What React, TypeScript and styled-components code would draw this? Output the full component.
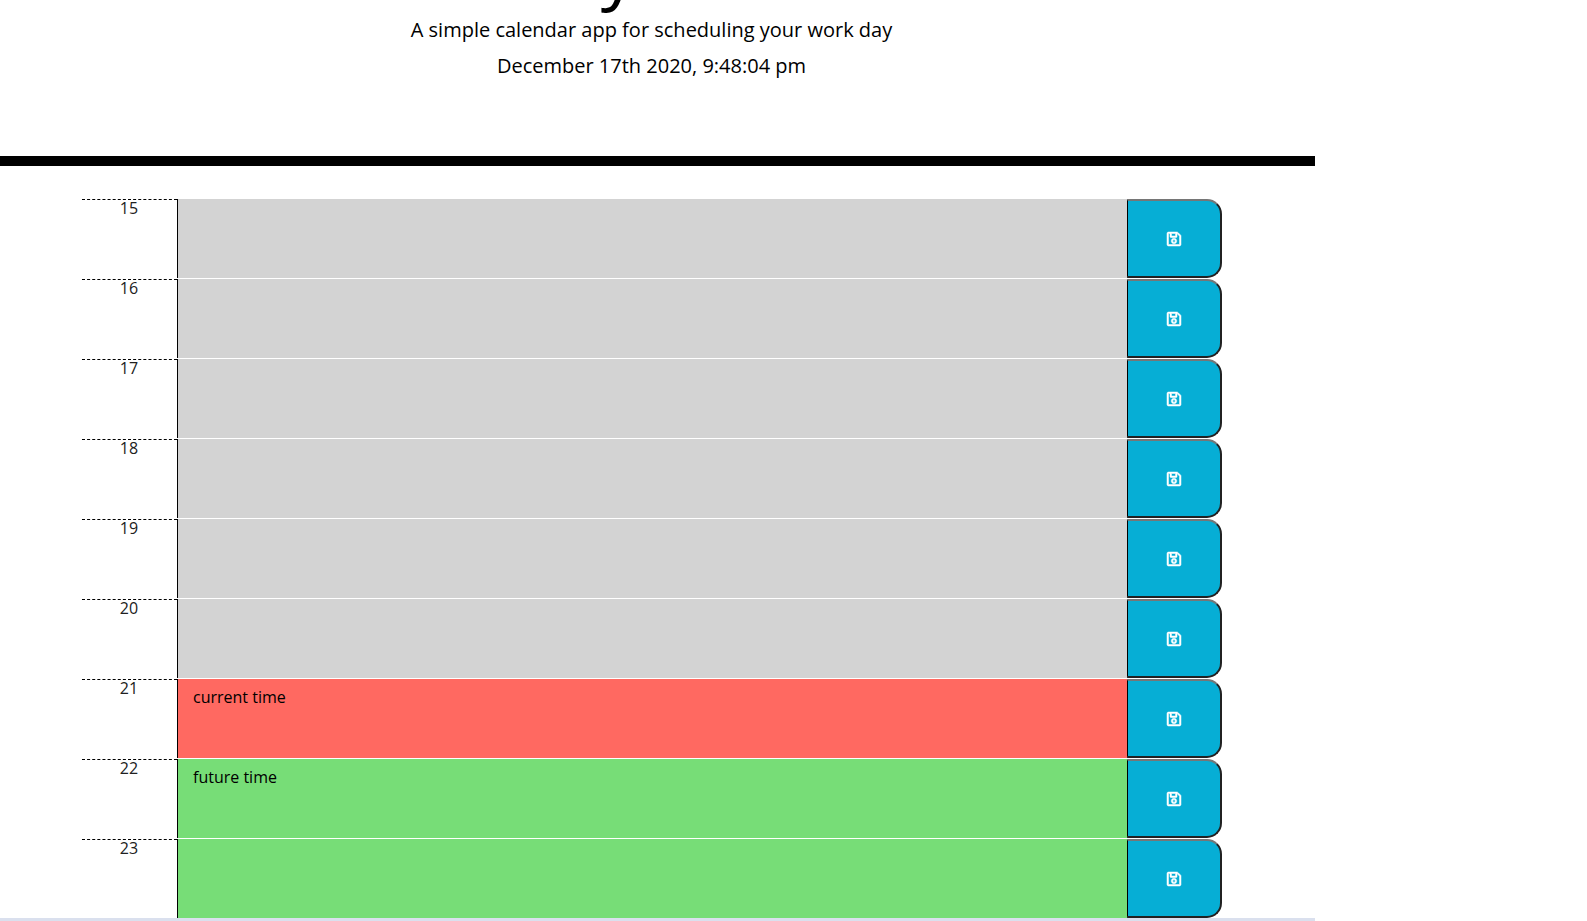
import React from "react";
import styled, { createGlobalStyle } from "styled-components";
import { FaRegSave } from "react-icons/fa";

type Tense = "past" | "present" | "future";

const slotColors: Record<Tense, string> = {
  past: "#d3d3d3",
  present: "#ff6961",
  future: "#77dd77",
};

const GlobalStyle = createGlobalStyle`
  *, *::before, *::after { box-sizing: border-box; }
  body {
    margin: 0;
    background: #fff;
    color: #000;
    font-family: "Open Sans", sans-serif;
    font-size: 16px;
    font-weight: 400;
    line-height: 24px;
  }
`;

const Page = styled.div`
  width: calc(100% - 272px);
  max-height: 100vh;
  overflow: hidden;
`;

const Header = styled.header`
  padding: 0 12px 69px 0;
  border-bottom: 10px solid #000;
  text-align: center;
`;

const Title = styled.h1`
  margin: -75px 0 4px;
  font-size: 72px;
  font-weight: 400;
  line-height: 86px;
`;

const Lead = styled.p`
  margin: 0 0 6px;
  font-size: 20px;
  line-height: 30px;
`;

const Schedule = styled.main`
  padding: 33px 93px 0 82px;
`;

const TimeBlock = styled.div`
  display: grid;
  grid-template-columns: 1fr 10fr 1fr;
  height: 79px;

  & + & {
    margin-top: 1px;
  }
`;

const Hour = styled.label`
  padding-right: 1px;
  border-top: 1px dashed #000;
  color: #212121;
  text-align: center;
  line-height: 16px;
`;

const Entry = styled.textarea<{ $tense: Tense }>`
  display: block;
  width: 100%;
  height: 100%;
  margin: 0;
  padding: 6px 15px;
  border: 0;
  border-left: 1px solid #000;
  border-radius: 0;
  outline: 0;
  resize: none;
  background: ${({ $tense }) => slotColors[$tense]};
  color: #000;
  font: inherit;
`;

const SaveButton = styled.button`
  display: flex;
  align-items: center;
  justify-content: center;
  padding: 0;
  border-style: solid;
  border-width: 2px 2px 2px 1px;
  border-color: #767676 #212121 #212121 #000;
  border-radius: 0 15px 15px 0;
  background: #06aed5;
  color: #fff;
  font-size: 16px;
  cursor: pointer;
`;

const SaveIcon = styled(FaRegSave)`
  stroke: #fff;
  stroke-width: 16px;
`;

const BottomEdge = styled.footer`
  height: 3px;
  background: #dae0ee;
`;

const slots: { hour: number; tense: Tense; text: string }[] = [
  { hour: 15, tense: "past", text: "" },
  { hour: 16, tense: "past", text: "" },
  { hour: 17, tense: "past", text: "" },
  { hour: 18, tense: "past", text: "" },
  { hour: 19, tense: "past", text: "" },
  { hour: 20, tense: "past", text: "" },
  { hour: 21, tense: "present", text: "current time" },
  { hour: 22, tense: "future", text: "future time" },
  { hour: 23, tense: "future", text: "" },
];

export default function App() {
  return (
    <>
      <GlobalStyle />
      <Page>
        <Header>
          <Title>Work Day Scheduler</Title>
          <Lead>A simple calendar app for scheduling your work day</Lead>
          <Lead>December 17th 2020, 9:48:04 pm</Lead>
        </Header>
        <Schedule>
          {slots.map(({ hour, tense, text }) => (
            <TimeBlock key={hour}>
              <Hour htmlFor={`entry-${hour}`}>{hour}</Hour>
              <Entry id={`entry-${hour}`} $tense={tense} defaultValue={text} spellCheck={false} />
              <SaveButton type="button" aria-label={`Save ${hour}`}>
                <SaveIcon aria-hidden />
              </SaveButton>
            </TimeBlock>
          ))}
        </Schedule>
        <BottomEdge />
      </Page>
    </>
  );
}
